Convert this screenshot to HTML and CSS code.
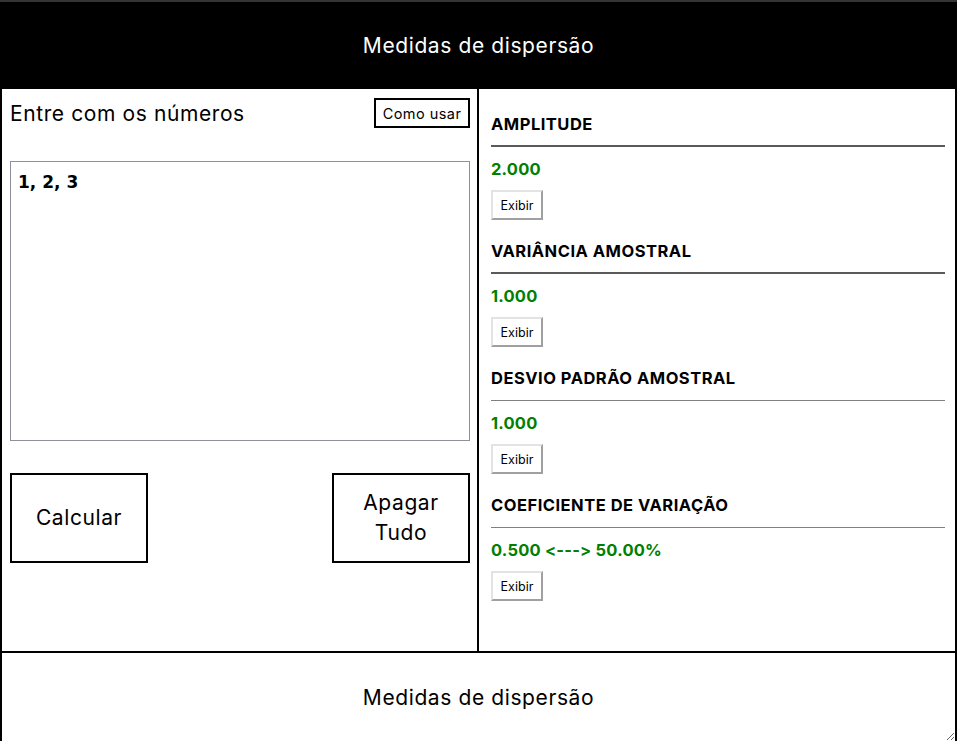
FILE: index.html
```html
<!DOCTYPE html>
<html lang="pt-BR">
<head>
<meta charset="utf-8">
<title>Medidas de dispersão</title>
<link rel="stylesheet" href="styles.css">
</head>
<body>
<div class="app">
  <header class="topbar">Medidas de dispersão</header>
  <main class="main">
    <section class="input-panel">
      <div class="input-head">
        <span class="label">Entre com os números</span>
        <button class="help-btn">Como usar</button>
      </div>
      <textarea class="numbers">1, 2, 3</textarea>
      <div class="actions">
        <button class="big-btn">Calcular</button>
        <button class="big-btn">Apagar<br>Tudo</button>
      </div>
    </section>
    <section class="results">
      <div class="measure">
        <h2 class="measure-title">AMPLITUDE</h2>
        <hr class="rule">
        <p class="value">2.000</p>
        <button class="show-btn">Exibir</button>
      </div>
      <div class="measure">
        <h2 class="measure-title">VARIÂNCIA AMOSTRAL</h2>
        <hr class="rule">
        <p class="value">1.000</p>
        <button class="show-btn">Exibir</button>
      </div>
      <div class="measure">
        <h2 class="measure-title">DESVIO PADRÃO AMOSTRAL</h2>
        <hr class="rule rule-thin">
        <p class="value">1.000</p>
        <button class="show-btn">Exibir</button>
      </div>
      <div class="measure">
        <h2 class="measure-title">COEFICIENTE DE VARIAÇÃO</h2>
        <hr class="rule rule-thin">
        <p class="value">0.500 &lt;---&gt; 50.00%</p>
        <button class="show-btn">Exibir</button>
      </div>
    </section>
  </main>
  <footer class="footer">Medidas de dispersão</footer>
</div>
</body>
</html>
```
FILE: styles.css
```css
* { box-sizing: border-box; }
html, body { margin: 0; padding: 0; }
body {
  font-family: Inter, "Open Sans", sans-serif;
  font-feature-settings: "calt" 0, "liga" 0;
  color: #000;
  background: #fff;
}
.app { border-top: 2px solid #333; }
.topbar {
  height: 87px;
  background: #000;
  color: #fff;
  display: flex;
  align-items: center;
  justify-content: center;
  font-size: 21px;
  letter-spacing: 0.6px;
}
.main {
  display: grid;
  grid-template-columns: 477px 1fr;
  height: 564px;
  border: 2px solid #000;
  border-top: 0;
}
.input-panel {
  border-right: 2px solid #000;
  padding: 9px 7px 0 8px;
}
.input-head {
  display: flex;
  justify-content: space-between;
  align-items: center;
  height: 30px;
}
.label {
  font-size: 21px;
  letter-spacing: 0.6px;
}
.help-btn {
  width: 96px;
  height: 30px;
  padding: 0;
  border: 2px solid #000;
  background: #fff;
  color: #000;
  font-family: inherit;
  font-size: 14.5px;
  letter-spacing: 0.45px;
}
.numbers {
  display: block;
  width: 100%;
  height: 280px;
  margin: 33px 0 0;
  padding: 10px 7px 8px;
  border: 1px solid #8f8f9d;
  border-radius: 0;
  resize: none;
  font-family: "DejaVu Sans", sans-serif;
  font-weight: 700;
  font-size: 17px;
  color: #000;
}
.actions {
  display: flex;
  justify-content: space-between;
  margin-top: 32px;
}
.big-btn {
  width: 138px;
  height: 90px;
  padding: 0;
  border: 2px solid #000;
  background: #fff;
  color: #000;
  font-family: inherit;
  font-size: 21px;
  letter-spacing: 0.6px;
  line-height: 30px;
}
.results { padding: 23px 10px 0 12px; }
.measure { margin-bottom: 19px; }
.measure-title {
  margin: 0;
  font-size: 16.5px;
  font-weight: 700;
  letter-spacing: 0.5px;
  line-height: 24px;
}
.rule {
  margin: 9px 0 10px;
  height: 0;
  border: 0;
  border-top: 2px solid #5a5a5a;
}
.rule-thin {
  margin: 10px 0 10px;
  border-top: 1px solid #808080;
}
.value {
  margin: 0;
  color: #008000;
  font-size: 16.5px;
  font-weight: 700;
  letter-spacing: 0.2px;
  line-height: 24px;
}
.show-btn {
  display: block;
  margin-top: 9px;
  width: 52px;
  height: 30px;
  padding: 0;
  background: #fff;
  color: #000;
  border: 2px solid;
  border-color: #e3e3e3 #a0a0a0 #a0a0a0 #e3e3e3;
  font-family: inherit;
  font-size: 12.5px;
}
.footer {
  height: 88px;
  border-left: 2px solid #000;
  border-right: 2px solid #000;
  display: flex;
  align-items: center;
  justify-content: center;
  font-size: 21px;
  letter-spacing: 0.6px;
  overflow: hidden;
  resize: both;
}
```
